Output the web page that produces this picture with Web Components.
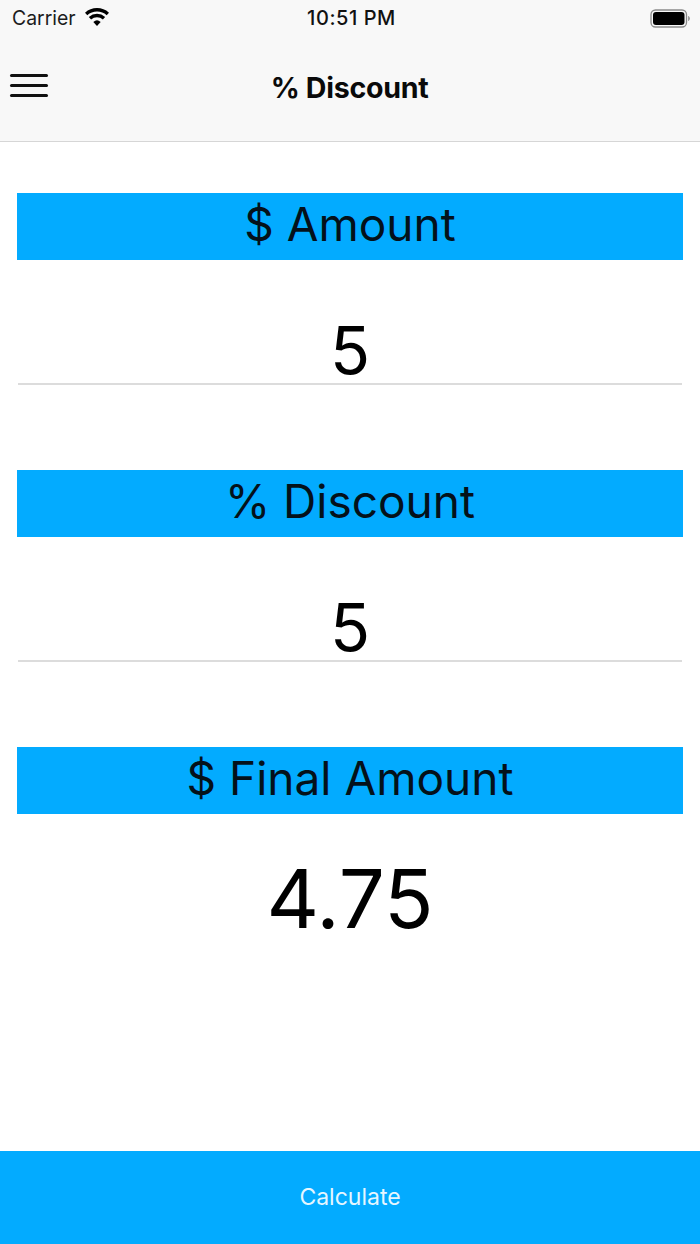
<!DOCTYPE html>
<html>
<head>
<meta charset="utf-8">
<title>% Discount</title>
<style>
  html, body { margin: 0; padding: 0; height: 100%; }
  body { background: #fff; color: #000; font-family: Inter, "Liberation Sans", sans-serif; }
</style>
</head>
<body>
<discount-app></discount-app>

<script>
class StatusBar extends HTMLElement {
  constructor() {
    super();
    this.attachShadow({ mode: 'open' });
    this.shadowRoot.innerHTML = `
    <style>
      :host {
        display: grid;
        grid-template-columns: 1fr auto 1fr;
        align-items: center;
        height: 36px;
        padding: 0 9px 0 12px;
        font-size: 19.4px;
      }
      .left { display: flex; align-items: center; gap: 9px; color: #1c1c1c; }
      .time { font-size: 20px; font-weight: 500; letter-spacing: 0.55px; color: #111; }
      .right { display: flex; justify-content: flex-end; }
      svg { display: block; }
    </style>
    <div class="left">
      <span>Carrier</span>
      <svg width="24" height="18" viewBox="0 0 24 18" style="margin-bottom:2px">
        <path d="M12 18L8.320 13.910A5.500 5.500 0 0 1 15.680 13.910Z" fill="#000"/>
        <path d="M4.980 10.200A10.500 10.500 0 0 1 19.020 10.200" fill="none" stroke="#000" stroke-width="3.400"/>
        <path d="M1.160 5.960A16.200 16.200 0 0 1 22.840 5.960" fill="none" stroke="#000" stroke-width="3.400"/>
      </svg>
    </div>
    <span class="time">10:51 PM</span>
    <div class="right">
      <svg width="41" height="19" viewBox="0 0 41 19">
        <rect x="1" y="1" width="35.500" height="17" rx="4.500" fill="none" stroke="#8a8a8a" stroke-width="1.300"/>
        <rect x="3" y="3" width="31.500" height="13" rx="3" fill="#000"/>
        <path d="M38.200 7v5c1-.3 1.600-1.300 1.600-2.500S39.200 7.300 38.200 7z" fill="#8a8a8a"/>
      </svg>
    </div>`;
  }
}
customElements.define('status-bar', StatusBar);

class NavBar extends HTMLElement {
  constructor() {
    super();
    this.attachShadow({ mode: 'open' });
    this.shadowRoot.innerHTML = `
    <style>
      :host {
        display: grid;
        grid-template-columns: 1fr auto 1fr;
        align-items: center;
        height: 106px;
        padding: 0 10px 2px;
        box-sizing: border-box;
        border-bottom: 1.5px solid #d6d6d6;
      }
      .menu { display: flex; flex-direction: column; gap: 7px; width: 38px; margin-top: -5px; }
      .menu span { display: block; height: 3px; border-radius: 2px; background: #111; }
      h1 { margin: 0 0 0 -1px; font-size: 28.600px; font-weight: 700; letter-spacing: -0.3px; color: #0a0a0a; }
    </style>
    <div class="menu"><span></span><span></span><span></span></div>
    <h1><slot></slot></h1>
    <div></div>`;
  }
}
customElements.define('nav-bar', NavBar);

class FieldHeading extends HTMLElement {
  constructor() {
    super();
    this.attachShadow({ mode: 'open' });
    this.shadowRoot.innerHTML = `
    <style>
      :host {
        display: flex;
        align-items: center;
        justify-content: center;
        height: 67px;
        box-sizing: border-box;
        padding-bottom: 6px;
        background: #03abff;
        font-size: 46px;
        color: #04111a;
        white-space: nowrap;
      }
    </style>
    <slot></slot>`;
  }
}
customElements.define('field-heading', FieldHeading);

class NumberField extends HTMLElement {
  constructor() {
    super();
    this.attachShadow({ mode: 'open' });
    this.shadowRoot.innerHTML = `
    <style>
      :host {
        display: flex;
        align-items: flex-end;
        justify-content: center;
        height: 125px;
        box-sizing: border-box;
        border-bottom: 2px solid #dcdcdc;
        font-size: 66px;
        line-height: 65px;
        color: #000;
      }
    </style>
    <slot></slot>`;
  }
}
customElements.define('number-field', NumberField);

class ResultValue extends HTMLElement {
  constructor() {
    super();
    this.attachShadow({ mode: 'open' });
    this.shadowRoot.innerHTML = `
    <style>
      :host {
        display: block;
        padding-top: 35px;
        text-align: center;
        font-size: 81.500px;
        line-height: 100px;
        color: #000;
      }
    </style>
    <slot></slot>`;
  }
}
customElements.define('result-value', ResultValue);

class CalcButton extends HTMLElement {
  constructor() {
    super();
    this.attachShadow({ mode: 'open' });
    this.shadowRoot.innerHTML = `
    <style>
      :host {
        display: flex;
        align-items: center;
        justify-content: center;
        height: 93px;
        box-sizing: border-box;
        padding-bottom: 2px;
        background: #03abff;
        color: #e6f6ff;
        font-size: 23px;
      }
    </style>
    <slot></slot>`;
  }
}
customElements.define('calc-button', CalcButton);

class DiscountApp extends HTMLElement {
  constructor() {
    super();
    this.attachShadow({ mode: 'open' });
    this.shadowRoot.innerHTML = `
    <style>
      :host { display: flex; flex-direction: column; height: 1244px; width: 700px; overflow: hidden; }
      header { background: #f8f8f8; }
      main {
        flex: 1;
        display: flex;
        flex-direction: column;
        padding: 51px 17px 0;
      }
      number-field { margin: 0 1px 85px; }
    </style>
    <header>
      <status-bar></status-bar>
      <nav-bar>% Discount</nav-bar>
    </header>
    <main>
      <field-heading>$ Amount</field-heading>
      <number-field>5</number-field>
      <field-heading>% Discount</field-heading>
      <number-field>5</number-field>
      <field-heading>$ Final Amount</field-heading>
      <result-value>4.75</result-value>
    </main>
    <calc-button>Calculate</calc-button>`;
  }
}
customElements.define('discount-app', DiscountApp);
</script>
</body>
</html>
